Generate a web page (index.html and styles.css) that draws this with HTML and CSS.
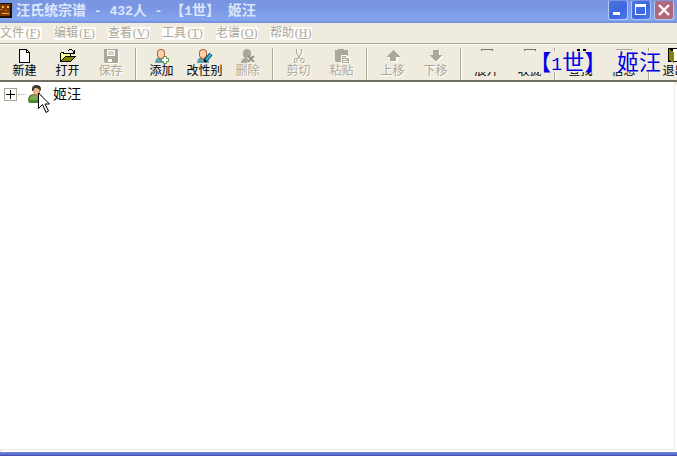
FILE: index.html
```html
<!DOCTYPE html>
<html lang="zh-CN">
<head>
<meta charset="utf-8">
<title>汪氏统宗谱</title>
<link rel="stylesheet" href="styles.css">
</head>
<body>
<div class="window">
  <header class="titlebar">
    <svg class="app-icon" width="12" height="16" viewBox="0 0 12 16" shape-rendering="crispEdges"><path fill="#211008" d="M0 1h12v15H0z"/><path fill="#793600" d="M0 2h10v12H0z"/><path fill="#ffb42c" d="M2 4h2v2H2zM7 4h2v2H7zM2 11h7v1H2z"/><path fill="#bd6810" d="M0 7h3v1H0zM5 8h2v1H5z"/></svg>
    <h1 class="title">汪氏统宗谱<span class="latin"> - 432</span>人<span class="latin"> - </span>【<span class="latin">1</span>世】<span class="latin"> </span>姬汪</h1>
    <div class="controls">
      <button class="control" aria-label="最小化"><svg width="20" height="20" viewBox="0 0 20 20" shape-rendering="crispEdges"><path fill="#fff" d="M5 12h7v3H5z"/></svg></button>
      <button class="control" aria-label="最大化"><svg width="20" height="20" viewBox="0 0 20 20" shape-rendering="crispEdges"><path fill="#fff" fill-rule="evenodd" d="M4 4h11v11H4zM5 7v7h9V7z"/></svg></button>
      <button class="control close" aria-label="关闭"><svg width="20" height="20" viewBox="0 0 20 20"><path stroke="#fff" stroke-width="2.4" d="M5 5l10 10M15 5L5 15"/></svg></button>
    </div>
  </header>
  <nav class="menu">
    <button class="menu-item">文件<span class="key">(<u>F</u>)</span></button>
    <button class="menu-item">编辑<span class="key">(<u>E</u>)</span></button>
    <button class="menu-item">查看<span class="key">(<u>V</u>)</span></button>
    <button class="menu-item">工具<span class="key">(<u>T</u>)</span></button>
    <button class="menu-item">老谱<span class="key">(<u>O</u>)</span></button>
    <button class="menu-item">帮助<span class="key">(<u>H</u>)</span></button>
  </nav>
  <div class="toolbar">
    <div class="tools">
      <button class="tool"><svg width="16" height="16" viewBox="0 0 16 16" shape-rendering="crispEdges"><path fill="#000" d="M2 1h8v1h1v1h1v1h1v11H2z"/><path fill="#fff" d="M3 2h6v3h3v9H3z"/><path fill="#fff" d="M10 3h1v1h-1z"/></svg>新建</button>
      <button class="tool"><svg width="16" height="16" viewBox="0 0 16 16" shape-rendering="crispEdges"><path fill="#000" d="M9 1h3v1H9zM8 2h1v1H8zM12 2h1v1h-1zM14 2h1v4h-4V5h2V3h1zM1 4h3v1h7v3h5v1h-1v1h-1v1h-1v1h-1v1h-1v1H0V5h1z"/><path fill="#ffff84" d="M1 5h2v1h7v2H5v1H4v1H3v1H2v1H1z"/><path fill="#848200" d="M5 9h9v1h-1v1h-1v1h-1v1H2v-1h1v-1h1v-1h1z"/></svg>打开</button>
      <button class="tool" disabled><svg width="16" height="16" viewBox="0 0 16 16" shape-rendering="crispEdges"><path fill="#fff" d="M2 2h14v14H3z"/><path fill="#aca899" fill-rule="evenodd" d="M1 1h14v14H2v-1H1zM4 2v6h8V2zM5 11v3h4v-3z"/><path fill="#d8d4c7" d="M5 3h6v4H5z"/></svg>保存</button>
      <span class="sep"></span>
      <button class="tool"><svg width="16" height="16" viewBox="0 0 16 16"><path fill="#5ca0aa" d="M1 15q0-6 6-6t6 6z"/><path fill="#a96745" d="M3 5q0-4 4-4t4 4v3l-2 3H5L3 8z"/><path fill="#ffd0aa" d="M4 5q0-3 3-3t3 3v3l-2 2H6L4 8z"/><path fill="#fff" stroke="#55943c" d="M9.500 8.500h3v2h2v3h-2v2h-3v-2h-2v-3h2z"/></svg>添加</button>
      <button class="tool"><svg width="16" height="16" viewBox="0 0 16 16"><path fill="#5ca0aa" d="M0 15q0-6 6-6t6 6z"/><path fill="#a96745" d="M2 5q0-4 4-4t4 4v3l-2 3H4L2 8z"/><path fill="#ffd0aa" d="M3 5q0-3 3-3t3 3v3l-2 2H5L3 8z"/><path stroke="#123b4b" stroke-width="4" d="M8 13l6-7"/><path stroke="#24bde4" stroke-width="2" d="M9 12l5-6"/><path fill="#000" d="M7 11v3h3z"/></svg>改性别</button>
      <button class="tool" disabled><svg width="16" height="16" viewBox="0 0 16 16"><path fill="#aca899" d="M3 5q0-4 4-4t4 4v3l-1 2 3 5H1q0-4 4-5L3 8z"/><path stroke="#fff" stroke-width="3" d="M8 9l6 6M14 9l-6 6"/><path stroke="#96917f" stroke-width="2" d="M8 8l6 6M14 8l-6 6"/></svg>删除</button>
      <span class="sep"></span>
      <button class="tool" disabled><svg width="16" height="16" viewBox="0 0 16 16" fill="none"><path stroke="#fff" d="M6.500 2v4l4 6M11.500 2v4l-4 6M5 11.500h2v3l-1 1H4.500v-3zM11 11.500h2l1 1v3h-2l-1-1z"/><path stroke="#aca899" d="M5.500 1v4l4 6M10.500 1v4l-4 6M4 10.500h2v3l-1 1H3.500v-3zM10 10.500h2l1 1v3h-2l-1-1z"/></svg>剪切</button>
      <button class="tool" disabled><svg width="16" height="16" viewBox="0 0 16 16" shape-rendering="crispEdges"><path fill="#aca899" d="M1 2h3V1h6v1h4v12H2v-1H1z"/><path fill="#fff" d="M7 7h6v1h1v1h2v7H7z"/><path fill="#aca899" fill-rule="evenodd" d="M8 8h4v2h3v5H8zM9 9v1h2V9zM9 11v1h4v-1zM9 13v1h5v-1z"/></svg>粘贴</button>
      <span class="sep"></span>
      <button class="tool" disabled><svg width="16" height="16" viewBox="0 0 16 16" shape-rendering="crispEdges"><path fill="#fff" d="M9 3l7 7h-3v4H6v-4H3z"/><path fill="#aca899" d="M8 2l7 7h-4v4H5V9H1z"/></svg>上移</button>
      <button class="tool" disabled><svg width="16" height="16" viewBox="0 0 16 16" shape-rendering="crispEdges"><path fill="#fff" d="M6 3h6v5h4l-7 6-6-6h3z"/><path fill="#aca899" d="M5 2h6v5h4l-7 6-7-6h4z"/></svg>下移</button>
      <span class="sep"></span>
      <button class="tool"><svg width="16" height="16" viewBox="0 0 16 16" fill="none" shape-rendering="crispEdges"><path stroke="#77756c" d="M2.500 14V1.500h11V14z"/></svg>展开</button>
      <button class="tool"><svg width="16" height="16" viewBox="0 0 16 16" fill="none" shape-rendering="crispEdges"><path stroke="#77756c" d="M2.500 14V1.500h11V14z"/></svg>收拢</button>
      <span class="sep"></span>
      <button class="tool"><svg width="16" height="16" viewBox="0 0 16 16" shape-rendering="crispEdges"><path d="M4 1h3v2H4zM10 1h3v2h-3zM3 3h4v8H3zM9 3h5v8H9z"/></svg>查找</button>
      <button class="tool"><svg width="16" height="16" viewBox="0 0 16 16" shape-rendering="crispEdges"><path fill="#aca899" d="M0 1h16v1H0z"/></svg>信息</button>
      <span class="sep"></span>
      <button class="tool"><svg width="16" height="16" viewBox="0 0 16 16" shape-rendering="crispEdges"><path d="M1 0h14v14H1z"/><path fill="#fff" d="M6 1h8v12H6z"/><path fill="#848200" d="M2 1l5 3v11l-5-3z"/></svg>退出</button>
    </div>
    <div class="banner">【<span class="latin">1</span>世】<span class="latin"> </span>姬汪</div>
  </div>
  <main class="tree">
    <div class="node">
      <button class="expander" aria-label="展开节点"><svg width="13" height="13" viewBox="0 0 13 13" shape-rendering="crispEdges"><path fill="#fff" stroke="#aca899" d="M.5.500h12v12H.5z"/><path d="M2 6h9v1H2zM6 2h1v9H6z"/></svg></button>
      <span class="branch"></span>
      <span class="person">
        <svg width="18" height="20" viewBox="0 0 18 20"><path fill="#4d8430" d="M0 16q0-6 6-6h4q5 0 5 6l-1 3H1z"/><path fill="#79b052" d="M2 14q1-3 5-3l3 2-1 3H2z"/><path fill="#bf7950" d="M5 5h7v5l-3 3-3-2z"/><path fill="#f3b384" d="M6 5h5v4l-2 2-3-2z"/><path fill="#403630" d="M4 7V4q1-3 4-3 5 0 5 4v2l-2-2-4-1-2 3z"/></svg>
        <svg class="pointer" width="12" height="21" viewBox="0 0 12 21"><path fill="#fff" stroke="#000" d="M.5 1v15.500l4-4 3.500 8 2.500-1.500-3.500-7h4.500z"/></svg>
      </span>
      <span class="name">姬汪</span>
    </div>
  </main>
  <footer class="frame"></footer>
</div>
</body>
</html>
```
FILE: styles.css
```css
* { box-sizing: border-box; }

body {
  margin: 0;
  overflow: hidden;
  font: 12px/14px "Liberation Sans", "Noto Sans CJK SC", sans-serif;
  color: #000;
}

button {
  margin: 0;
  padding: 0;
  border: 0;
  background: none;
  font: inherit;
  color: inherit;
}

svg { display: block; flex: none; }

.window {
  display: flex;
  flex-direction: column;
  height: 100vh;
  background: #efebde;
}

.titlebar {
  display: flex;
  align-items: center;
  height: 23px;
  padding-bottom: 3px;
  background: linear-gradient(#7994e0, #7b98e4 40%, #84a6ee 85%, #738ed8);
}

.title {
  flex: 1;
  margin: 0 0 0 4px;
  font: bold 14px/18px "Noto Sans CJK SC", sans-serif;
  color: #dce6fc;
  white-space: pre;
}

.title .latin { font: bold 13px/18px "Liberation Mono", monospace; }

.controls { display: flex; gap: 3px; padding-right: 3px; }

.control {
  display: flex;
  align-items: center;
  justify-content: center;
  width: 20px;
  height: 20px;
  border: 1px solid #b4c8f6;
  border-top-color: #7994e0;
  border-radius: 3px;
  background: linear-gradient(135deg, #4b73dd, #3d67e0 60%, #4e7cf0);
}

.control.close { background: linear-gradient(135deg, #ad6c83, #b5656f); }

.menu {
  display: flex;
  gap: 12px;
  align-items: center;
  height: 20px;
  color: #aca899;
}

.menu-item { display: flex; height: 13px; line-height: 13px; background: #fdfcf8; }

.key {
  width: 18px;
  font: 12px/13px "Liberation Serif", serif;
  text-align: center;
}

.toolbar {
  position: relative;
  height: 39px;
  border-top: 1px solid #aca899;
  border-bottom: 2px solid #716f64;
  box-shadow: inset 0 1px #fff;
  overflow: hidden;
}

.tools { display: flex; height: 36px; padding: 4px 0 0 3px; }

.tool {
  display: flex;
  flex: none;
  flex-direction: column;
  align-items: center;
  width: 43px;
  white-space: nowrap;
}

.tool:disabled { color: #aca899; text-shadow: 1px 1px #fff; }

.sep {
  flex: none;
  width: 2px;
  height: 32px;
  margin: 0 3px;
  border-left: 1px solid #aca899;
  border-right: 1px solid #fff;
}

.banner {
  position: absolute;
  top: 7px;
  right: 16px;
  width: 192px;
  height: 21px;
  font: 22px/18px "Noto Sans CJK SC", sans-serif;
  color: #0000e8;
  text-align: right;
  white-space: pre;
  background: #efebde;
}

.banner .latin { font: 18px/18px "Liberation Mono", monospace; }

.tree {
  flex: 1;
  padding: 1px 4px;
  border-right: 1px solid #efebde;
  border-bottom: 1px solid #efebde;
  margin: 0 2px 2px 0;
  background: #fff;
  box-shadow: 2px 2px #fff;
}

.node { display: flex; align-items: center; height: 22px; }

.branch { width: 8px; margin: 0 2px 0 1px; border-top: 1px dotted #aca899; }

.person { position: relative; margin-right: 7px; }

.pointer { position: absolute; left: 10px; top: 8px; }

.name { font-size: 14px; line-height: 20px; }

.frame {
  height: 4px;
  border-top: 1px solid #7389dd;
  border-bottom: 1px solid #4650a8;
  background: #5d70d4;
}
```
